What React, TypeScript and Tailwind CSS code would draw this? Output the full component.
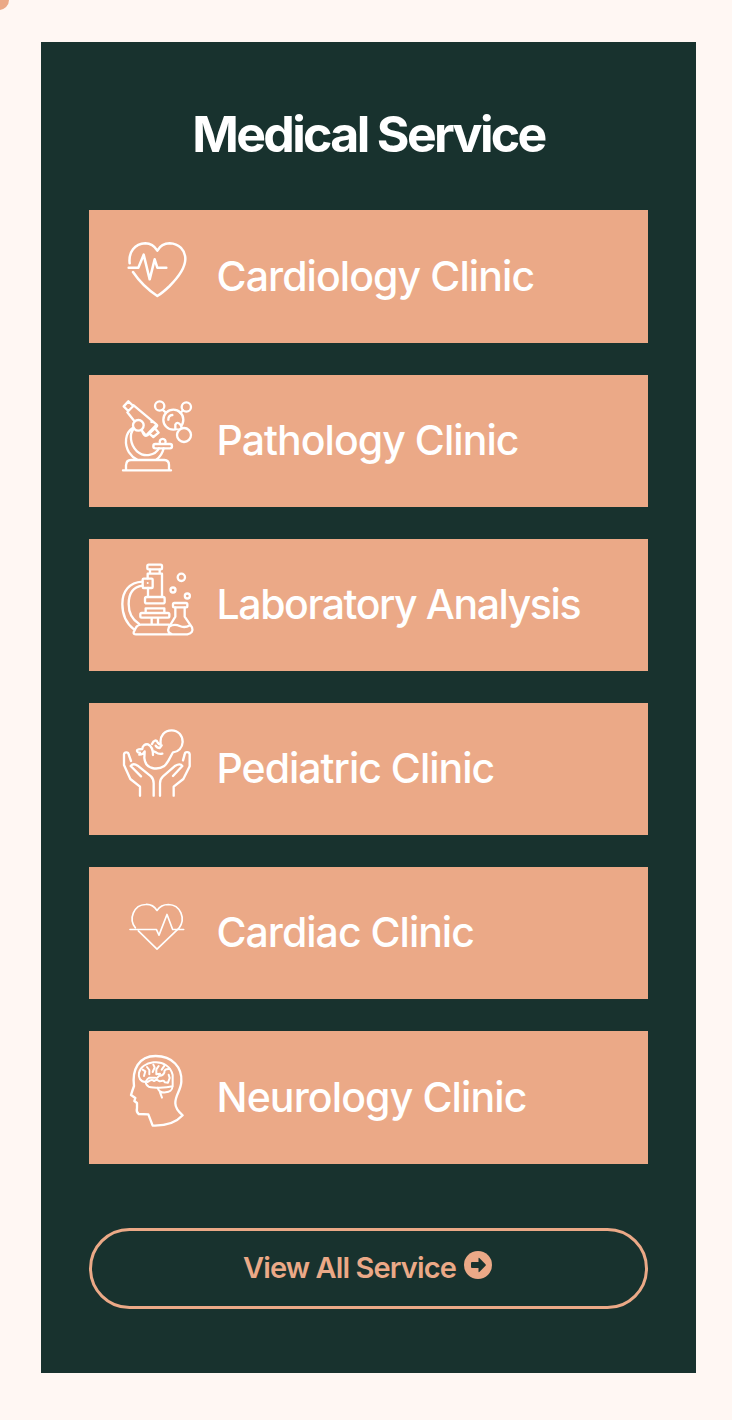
import type { ReactNode } from "react";

type IconProps = { viewBox: string; stroke: number; children: ReactNode };

function Icon({ viewBox, stroke, children }: IconProps) {
  return (
    <svg
      viewBox={viewBox}
      className="h-[72px] w-[72px] shrink-0 overflow-visible"
      fill="none"
      stroke="white"
      strokeWidth={stroke}
      strokeLinecap="round"
      strokeLinejoin="round"
      aria-hidden="true"
    >
      {children}
    </svg>
  );
}

const cardiology = (
  <Icon viewBox="33 13 216 216" stroke={7.5}>
    <path d="M59 101C55 68 74 42 106 41C122 41 134 50 142 63C150 49 163 41 179 41C207 42 226 61 226 89C225 119 203 145 179 169Q157 190 142 199Q98 170 69 127" />
    <path d="M56 114H85L101 75L119 149L134 89L142 114H169" />
  </Icon>
);

const pathology = (
  <Icon viewBox="27 20 216 216" stroke={7}>
    <path d="M49 27L64 41L49 56L35 42Z M65 39L134 97L102 130L46 60 M118 89Q124 87 134 97Q137 99 134 103L106 129Q100 133 95 126L91 118 M130 109L140 121L124 134L112 124" />
    <path d="M66 108C51 124 54 158 75 177C98 197 130 189 141 168 M62 107C38 122 37 157 51 180Q61 195 75 202 M155 168Q150 190 133 202" />
    <circle cx="79" cy="99" r="16" fill="#eba987" />
    <rect x="124" y="155" width="56" height="13" rx="6" />
    <path d="M144 153C138 135 166 135 160 153 M42 231V219Q43 203 57 203H157Q171 204 171 218V231 M33 234H177" />
    <circle cx="184" cy="82" r="30" />
    <circle cx="143" cy="41" r="14" />
    <circle cx="223" cy="44" r="14" />
    <path d="M190 108V97Q196 86 206 98L210 109" fill="#eba987" />
    <circle cx="216" cy="128" r="21" fill="#eba987" />
    <path d="M151 52L162 61 M213 54L205 62 M169 82Q169 69 181 68" />
  </Icon>
);

const laboratory = (
  <Icon viewBox="27 26 216 216" stroke={7}>
    <rect x="106" y="31" width="44" height="14" rx="4" />
    <path d="M114 46V58 M143 46V58 M107 72V58H150V127 M108 101V127" />
    <rect x="92" y="73" width="30" height="28" rx="3" />
    <circle cx="107" cy="86" r="3" fill="white" stroke="none" />
    <rect x="99" y="128" width="59" height="19" rx="5" />
    <path d="M101 175V162H157V175" />
    <rect x="85" y="176" width="87" height="14" rx="4" />
    <path d="M119 192V209 M138 192V209 M91 82C52 84 31 111 31 149C31 183 45 209 66 225 M91 94C61 98 50 120 50 149C50 176 59 195 81 208 M171 211H87Q76 211 70 223L65 234Q64 240 72 240H226Q246 236 240 219L218 187V160 M190 160V187L171 218Q163 236 181 240" />
    <rect x="183" y="146" width="43" height="13" rx="4" />
    <path d="M172 216Q188 208 203 215T234 213" />
    <circle cx="208" cy="69" r="11" />
    <circle cx="183" cy="107" r="7.5" />
    <circle cx="226" cy="125" r="7.5" />
  </Icon>
);

const pediatric = (
  <Icon viewBox="27 21 216 216" stroke={7}>
    <path d="M84 227V200L55 177L36 135V103C37 95 49 95 50 103L57 123 M87 169L56 138C61 132 68 131 77 137L117 169Q125 177 125 190V227 M185 227V200L214 177L233 139V103C232 95 219 94 218 103L213 121 M183 168L211 138C207 131 198 132 190 137L153 169Q144 177 144 190V227" />
    <path d="M146 70C143 47 158 31 179 31C199 31 212 47 212 66C211 84 199 96 183 97C177 105 172 124 157 138C137 151 100 149 97 114L98 96 M98 94C95 102 89 104 82 104L84 98C74 99 72 89 80 88L91 87C91 77 98 72 108 73Q123 80 123 105 M123 93L132 97Q139 103 151 101 M120 72C125 60 134 58 137 68Q141 75 149 76L143 84Q135 84 131 77" />
  </Icon>
);

const cardiac = (
  <Icon viewBox="27 3.6 216 216" stroke={5}>
    <path d="M70 114C49 87 65 45 101 44C117 43 128 51 135 62C143 50 153 44 169 44C206 45 222 87 201 115L135 178L79 123" />
    <path d="M54 119H133L141 136L165 74L182 119H215" />
  </Icon>
);

const neurology = (
  <Icon viewBox="27 31 216 216" stroke={7}>
    <path d="M66 124C60 76 79 34 131 34C181 34 211 68 208 111C207 137 189 152 190 176C190 191 200 202 212 212Q182 245 122 243L109 209L80 208Q72 202 75 190V175L67 169L70 160L57 151Q61 138 66 124Z" />
    <path d="M101 112C85 111 78 99 81 84C85 68 102 56 124 53C154 49 177 68 182 91V125C159 131 124 130 110 126Q102 122 101 112Z" strokeWidth={6} />
    <path d="M137 129C142 151 182 145 181 127 M144 143L150 159 M101 111Q106 102 112 99H130 M92 75L100 80L96 94 M105 67L112 76V89 M124 60L128 68L122 82 M140 64L133 74V89L144 87 M158 62L149 75 M173 73Q156 71 157 84Q153 94 142 93L135 100 M107 112Q119 102 126 109L134 105L143 110Q157 105 158 113L168 114L173 100L170 90" strokeWidth={6} />
  </Icon>
);

const services = [
  { name: "Cardiology Clinic", icon: cardiology, tracking: "tracking-[-0.92px]" },
  { name: "Pathology Clinic", icon: pathology, tracking: "tracking-[-0.95px]" },
  { name: "Laboratory Analysis", icon: laboratory, tracking: "tracking-[-1.42px]" },
  { name: "Pediatric Clinic", icon: pediatric, tracking: "tracking-[-1px]" },
  { name: "Cardiac Clinic", icon: cardiac, tracking: "tracking-[-1px]" },
  { name: "Neurology Clinic", icon: neurology, tracking: "tracking-[-0.87px]" },
];

export default function App() {
  return (
    <main className="relative h-[1420px] w-[732px] overflow-hidden bg-[#fff7f3] pt-[42px] pl-[41px] font-['Inter',sans-serif]">
      <span className="absolute -top-[10px] -left-[11px] h-5 w-5 rounded-full bg-[#eba987]" />
      <section className="flex h-[1331px] w-[655px] flex-col bg-[#18322e] px-12 pt-[60px]">
        <h2 className="h-[108.4px] text-center text-[50px] leading-[64px] font-bold tracking-[-2.65px] whitespace-nowrap text-white">
          Medical Service
        </h2>
        <ul className="flex flex-col gap-8">
          {services.map((service) => (
            <li key={service.name} className="flex h-[132.2px] w-full gap-[23.5px] bg-[#eba987] px-8 pt-6">
              {service.icon}
              <span className={`pt-[10.3px] text-[41px] leading-[63px] font-medium whitespace-nowrap text-white ${service.tracking}`}>
                {service.name}
              </span>
            </li>
          ))}
        </ul>
        <button className="mt-16 flex h-[81px] w-full shrink-0 items-center justify-center gap-2 rounded-full border-[3px] border-[#eba987] pr-[2px] text-[#eba987]">
          <span className="text-[29px] leading-10 font-semibold tracking-[-0.9px] whitespace-nowrap">View All Service</span>
          <svg viewBox="0 0 28 28" className="mb-[7px] h-7 w-7" aria-hidden="true">
            <circle cx="14" cy="14" r="14" fill="currentColor" />
            <path d="M8 11H14.5V7.6Q14.5 6.2 15.6 7.2L21.5 13.2Q22.2 14 21.5 14.8L15.6 20.8Q14.5 21.8 14.5 20.4V17H8Q7 17 7 16V12Q7 11 8 11Z" fill="#18322e" />
          </svg>
        </button>
      </section>
    </main>
  );
}
